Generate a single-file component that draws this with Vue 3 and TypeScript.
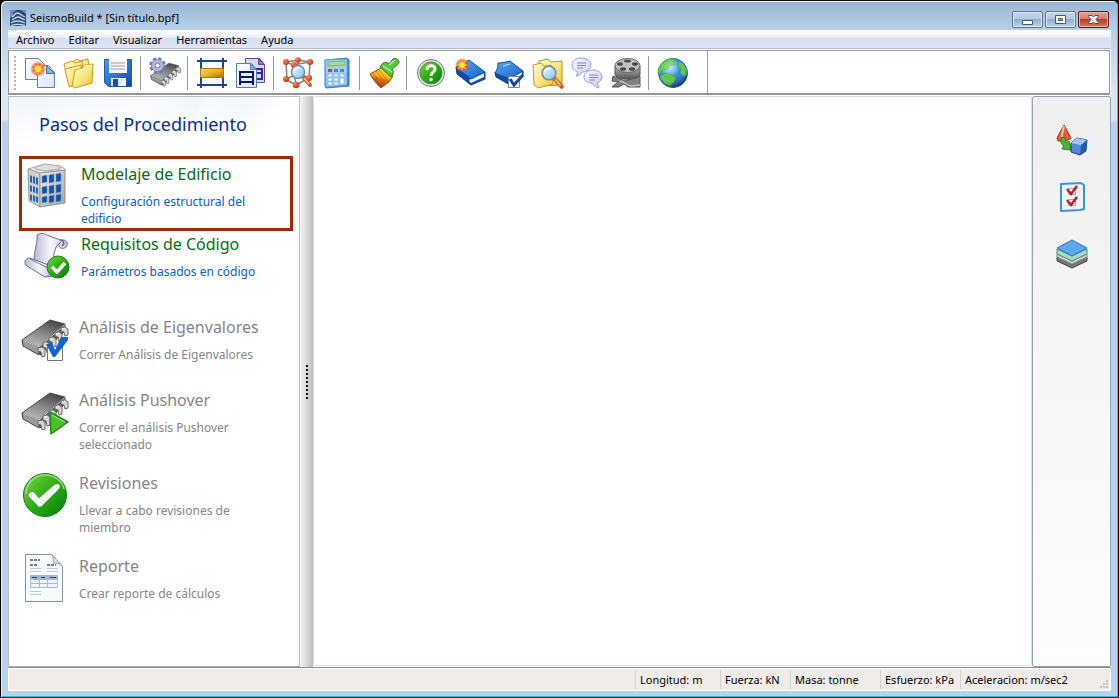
<script setup lang="ts">
interface Step {
  id: string
  title: string
  text: string
  enabled: boolean
  selected?: boolean
}

const menus: string[] = ['Archivo', 'Editar', 'Visualizar', 'Herramientas', 'Ayuda']

const toolGroups: { id: string; label: string }[][] = [
  [
    { id: 'new', label: 'Nuevo' },
    { id: 'open', label: 'Abrir' },
    { id: 'save', label: 'Guardar' },
  ],
  [{ id: 'settings', label: 'Configuración' }],
  [
    { id: 'section', label: 'Secciones' },
    { id: 'copy', label: 'Copiar planta' },
  ],
  [
    { id: 'model', label: 'Ver modelo' },
    { id: 'calculator', label: 'Calculadora' },
  ],
  [{ id: 'brush', label: 'Apariencia' }],
  [
    { id: 'help', label: 'Ayuda' },
    { id: 'booknew', label: 'Manual' },
    { id: 'bookcheck', label: 'Verificación' },
    { id: 'search', label: 'Ejemplos' },
    { id: 'chat', label: 'Foro' },
    { id: 'video', label: 'Videos' },
  ],
  [{ id: 'web', label: 'Sitio web' }],
]

const steps: Step[] = [
  { id: 'building', title: 'Modelaje de Edificio', text: 'Configuración estructural del edificio', enabled: true, selected: true },
  { id: 'code', title: 'Requisitos de Código', text: 'Parámetros basados en código', enabled: true },
  { id: 'eigen', title: 'Análisis de Eigenvalores', text: 'Correr Análisis de Eigenvalores', enabled: false },
  { id: 'pushover', title: 'Análisis Pushover', text: 'Correr el análisis Pushover seleccionado', enabled: false },
  { id: 'checks', title: 'Revisiones', text: 'Llevar a cabo revisiones de miembro', enabled: false },
  { id: 'report', title: 'Reporte', text: 'Crear reporte de cálculos', enabled: false },
]

const units: { text: string; size: string }[] = [
  { text: 'Longitud: m', size: 'w85' },
  { text: 'Fuerza: kN', size: 'w70' },
  { text: 'Masa: tonne', size: 'w90' },
  { text: 'Esfuerzo: kPa', size: 'w80' },
  { text: 'Aceleracion: m/sec2', size: 'w150' },
]
</script>

<template>
  <div class="window">
    <svg class="defs" width="0" height="0" aria-hidden="true">
      <defs>
        <linearGradient id="page" x1="0" y1="0" x2="1" y2="1"><stop offset="0" stop-color="#fff" /><stop offset="1" stop-color="#d3e5f8" /></linearGradient>
        <linearGradient id="folder" x1="0" y1="0" x2="1" y2="1"><stop offset="0" stop-color="#fffbd0" /><stop offset=".5" stop-color="#fbe88a" /><stop offset="1" stop-color="#f0c430" /></linearGradient>
        <linearGradient id="blue" x1="0" y1="0" x2="1" y2="1"><stop offset="0" stop-color="#4a9ef0" /><stop offset="1" stop-color="#0a48a8" /></linearGradient>
        <linearGradient id="cover" x1="0" y1="0" x2="1" y2="1"><stop offset="0" stop-color="#5aaaf4" /><stop offset="1" stop-color="#1560c4" /></linearGradient>
        <linearGradient id="chip" x1=".25" y1=".9" x2=".7" y2=".05"><stop offset="0" stop-color="#b4b4b4" /><stop offset=".5" stop-color="#868686" /><stop offset="1" stop-color="#4c4c4c" /></linearGradient>
        <linearGradient id="gold" x1="0" y1="0" x2="1" y2="1"><stop offset="0" stop-color="#f6dc50" /><stop offset=".5" stop-color="#e2b41c" /><stop offset="1" stop-color="#a07400" /></linearGradient>
        <linearGradient id="lens" x1="0" y1="0" x2="1" y2="1"><stop offset="0" stop-color="#effaff" /><stop offset="1" stop-color="#7fc2ee" /></linearGradient>
        <linearGradient id="lilac" x1="0" y1="0" x2="1" y2="1"><stop offset="0" stop-color="#fbfbff" /><stop offset="1" stop-color="#c8caec" /></linearGradient>
        <linearGradient id="greenball" x1="0" y1="0" x2="1" y2="1"><stop offset="0" stop-color="#7fd644" /><stop offset=".5" stop-color="#2cac14" /><stop offset="1" stop-color="#087a10" /></linearGradient>
        <linearGradient id="paint" x1=".7" y1="0" x2=".4" y2="1"><stop offset="0" stop-color="#ffe64a" /><stop offset=".45" stop-color="#f5b41c" /><stop offset=".6" stop-color="#d8640c" /><stop offset="1" stop-color="#a03c08" /></linearGradient>
        <linearGradient id="scroll" x1="0" y1="0" x2="1" y2="0"><stop offset="0" stop-color="#b9bad2" /><stop offset=".5" stop-color="#f6f6fd" /><stop offset="1" stop-color="#c3c4dc" /></linearGradient>
        <linearGradient id="wall" x1="0" y1="0" x2="1" y2="1"><stop offset="0" stop-color="#efefed" /><stop offset="1" stop-color="#a3a3a0" /></linearGradient>
        <linearGradient id="metal" x1="0" y1="0" x2="0" y2="1"><stop offset="0" stop-color="#b5b5b5" /><stop offset="1" stop-color="#555" /></linearGradient>
        <radialGradient id="globe" cx=".38" cy=".3" r=".75"><stop offset="0" stop-color="#a4dcff" /><stop offset=".5" stop-color="#2c87dc" /><stop offset="1" stop-color="#053c88" /></radialGradient>
        <radialGradient id="shade" cx=".4" cy=".3" r=".7"><stop offset="0" stop-color="#fff" stop-opacity=".45" /><stop offset=".5" stop-color="#fff" stop-opacity="0" /><stop offset="1" stop-color="#013068" stop-opacity=".45" /></radialGradient>
        <radialGradient id="star"><stop offset="0" stop-color="#ff8030" /><stop offset=".6" stop-color="#f5442c" stop-opacity=".9" /><stop offset="1" stop-color="#ff6040" stop-opacity="0" /></radialGradient>
        <radialGradient id="node" cx=".35" cy=".3" r=".7"><stop offset="0" stop-color="#ff8a5c" /><stop offset="1" stop-color="#d42c08" /></radialGradient>
        <g id="flare">
          <circle r="8" fill="url(#star)" />
          <path d="M0-6.500 1.300-3.200 4.600-4.600 3.200-1.300 6.500 0 3.200 1.300 4.600 4.600 1.300 3.200 0 6.500-1.300 3.200-4.600 4.600-3.200 1.300-6.500 0-3.200-1.300-4.600-4.600-1.300-3.200Z" fill="#ffb428" />
          <circle r="3" fill="#ffea3c" />
        </g>
        <g id="microchip">
          <path d="m1 25 17 7v8L2 31Z" fill="#9a9a9a" stroke="#444" />
          <path d="m18 32 26-23v7L19 40Z" fill="#5d5d5d" stroke="#444" />
          <path d="m1 25 28-20 15 4-26 23Z" fill="url(#chip)" stroke="#4a4a4a" />
          <path d="m2 25.500 16 6.500L44 9.500" fill="none" stroke="#c9c9c9" />
          <g fill="#d6d6d6" stroke="#6b6b6b" stroke-linejoin="round">
            <path d="m40 13 4-1 3 2v6l-3 1-1-4-3-1Z" />
            <path d="m34 18 4-1 3 2v7l-3 1-1-5-3-1Z" />
            <path d="m28 23 4-1 3 2v7l-3 1-1-5-3-1Z" />
            <path d="m22 28 4-1 3 2v8l-3 1-1-5-3-1Z" />
            <path d="m17 33 4-1 3 2v7l-3 1-1-5-3-1Z" />
          </g>
          <path d="m41 14 3-1M35 19l3-1M29 24l3-1M23 29l3-1" stroke="#fff" />
        </g>
        <g id="glass">
          <path d="m5 5 7 8" stroke="#d55e20" stroke-width="4" stroke-linecap="round" />
          <path d="m6 6 5 6" stroke="#ffc98a" stroke-width="1.500" />
          <circle r="6.500" fill="url(#lens)" stroke="#6c8fae" stroke-width="1.500" />
          <path d="M-4-1c1-3 4-4 6-3" fill="none" stroke="#fff" stroke-width="1.500" />
        </g>
      </defs>
    </svg>

    <header class="titlebar">
      <svg class="logo" viewBox="0 0 16 16" aria-hidden="true">
        <path d="M0 0h16v16H0Z" fill="#2a4a72" />
        <path d="M0 0h6L3 3v3L0 8ZM11 0h5v4Z" fill="#6f93b8" />
        <path d="M2 7c2-1 3-4 5-4 3 0 5 3 8 4M2 10c2-1 4-3 6-3s4 2 7 3M1 13c3-2 5-2 7-2s4 1 7 2M1 15.500c3-1 6-1.500 9-1l5 1" fill="none" stroke="#c3d9ec" stroke-width="1.300" />
      </svg>
      <span class="caption">SeismoBuild * [Sin título.bpf]</span>
      <div class="controls">
        <button type="button" class="ctl" aria-label="Minimizar">
          <svg viewBox="0 0 29 15"><path d="M9.500 8.500h10v4h-10Z" fill="#fff" stroke="#4b566b" /></svg>
        </button>
        <button type="button" class="ctl" aria-label="Maximizar">
          <svg viewBox="0 0 29 15"><path d="M9.500 3.500h10v8h-10Z" fill="#fff" stroke="#4b566b" /><path d="M12.500 6.500h4v2h-4Z" fill="#9cb8d5" stroke="#4b566b" /></svg>
        </button>
        <button type="button" class="ctl close" aria-label="Cerrar">
          <svg viewBox="0 0 29 15"><path d="M9.500 3.500h3.500l1.500 1.500L16 3.500h3.500v1L17 7.500l2.500 3v1H16L14.500 10 13 11.500H9.500v-1l2.500-3-2.500-3Z" fill="#fff" stroke="#684149" /></svg>
        </button>
      </div>
    </header>

    <div class="client">
      <nav class="menubar">
        <button v-for="m in menus" :key="m" type="button">{{ m }}</button>
      </nav>

      <div class="toolbar">
        <div class="tools">
          <span class="grip"></span>
          <div v-for="(group, i) in toolGroups" :key="i" class="group">
            <button v-for="tool in group" :key="tool.id" type="button" class="tool" :aria-label="tool.label">
              <svg viewBox="0 0 32 32" aria-hidden="true">
                <g v-if="tool.id === 'new'">
                  <path d="M1.500 1.500h13l7 7v14h-20Z" fill="url(#page)" stroke="#5f7fae" />
                  <path d="M13.500 8.500h11l6 7v15h-17Z" fill="url(#page)" stroke="#5f7fae" />
                  <path d="m22.500 8.500 8 8h-8Z" fill="#84b4e6" stroke="#476fa5" />
                  <use href="#flare" x="14" y="12" />
                </g>
                <g v-else-if="tool.id === 'open'" stroke="#c79a1c" stroke-linejoin="round">
                  <path d="m7 6 8-4 2 2 8-2 2 18-17 6Z" fill="url(#folder)" />
                  <path d="m1 7 8-3 3 2 7-2 2 19-15 5Z" fill="url(#folder)" />
                  <path d="m2 12 16-4 2 18-14 4Z" fill="url(#folder)" />
                  <path d="m12 13 8-2 2-3 8-1-1 19-17 5-3-2Z" fill="url(#folder)" />
                  <path d="m13 14 7-2 2-3 6-1" fill="none" stroke="#fffbd8" />
                </g>
                <g v-else-if="tool.id === 'save'">
                  <path d="M2.500 2.500h27v27h-23l-4-4Z" fill="url(#blue)" stroke="#1a5cb4" />
                  <path d="M7 2h18v14H7Z" fill="#f4f6f8" />
                  <path d="M9 6h14M9 9h14M9 12h14" stroke="#b9bdc4" stroke-width="1.500" />
                  <path d="M9 21h15v8H9Z" fill="#dce8f4" /><path d="M11 22h5v7h-5Z" fill="#1c4f91" /><path d="m18 29 4-8h2v8Z" fill="#fff" />
                </g>
                <g v-else-if="tool.id === 'settings'">
                  <use href="#microchip" transform="translate(1 3) scale(.65 .63)" />
                  <circle cx="8.500" cy="8.500" r="6.500" fill="none" stroke="#6f78b8" stroke-width="3.500" stroke-dasharray="3 2.100" />
                  <circle cx="8.500" cy="8.500" r="6" fill="#b4bae6" stroke="#7a82bf" />
                  <circle cx="8.500" cy="8.500" r="2.500" fill="#f2f3ff" stroke="#6c74ae" />
                </g>
                <g v-else-if="tool.id === 'section'">
                  <path d="M5 1v30M27 1v30M1 4h30M1 28h30" stroke="#1a489c" stroke-width="2" />
                  <path d="M4.500 11.500h23v9h-23Z" fill="url(#gold)" stroke="#a9770c" />
                </g>
                <g v-else-if="tool.id === 'copy'">
                  <path d="M10.500 1.500h14l5 6v18h-19Z" fill="#d9d5ef" stroke="#5c4a95" />
                  <path d="m23.500 1.500 6 6h-6Z" fill="#8673bd" stroke="#5c4a95" />
                  <path d="M21 12h6v10h-6M21 16h6" fill="none" stroke="#38209a" stroke-width="2" />
                  <path d="M1.500 6.500h15l5 6v18h-20Z" fill="url(#page)" stroke="#527fae" />
                  <path d="m15.500 6.500 6 6h-6Z" fill="#75aedf" stroke="#527fae" />
                  <path d="M5 28V15h13v13M5 20h13M5 25h13" fill="none" stroke="#0a1480" stroke-width="2" />
                </g>
                <g v-else-if="tool.id === 'model'">
                  <path d="m4 5 7 3 17-3-12-2ZM4 5l1 18 9 5 13-7 1-16M11 8l3 20M16 2v15M5 22l11-6 11 5" fill="none" stroke="#858585" stroke-width="1.600" />
                  <g fill="url(#node)"><circle cx="4" cy="5" r="3" /><circle cx="16" cy="3" r="2.800" /><circle cx="28" cy="5" r="3" /><circle cx="12" cy="8" r="3" /><circle cx="4" cy="22" r="3" /><circle cx="14" cy="28" r="3.200" /><circle cx="27" cy="21" r="3" /></g>
                  <use href="#glass" x="16" y="15" />
                </g>
                <g v-else-if="tool.id === 'calculator'">
                  <path d="m4 3 22-2 2 2v26l-23 2-1-2Z" fill="#3386d0" stroke="#347dc2" />
                  <path d="m4 3 22-1v26L5 30Z" fill="#9bcff5" stroke="#5ba7df" />
                  <path d="m7 5 17-1v4L7 9Z" fill="#a9df80" stroke="#65a050" stroke-width=".6" />
                  <path d="M7 12h4v3H7z" fill="#cf3f32" /><path d="M13 12h4v3h-4zM19 12h4v3h-4z" fill="#6e7f94" />
                  <path d="M7 17h4v3H7zM13 17h4v3h-4zM19 17h4v3h-4zM7 21h4v3H7zM13 21h4v3h-4zM7 25h4v3H7zM13 25h4v3h-4zM19 21h4v6h-4z" fill="#f5faff" stroke="#639bd0" stroke-width=".5" />
                </g>
                <g v-else-if="tool.id === 'brush'">
                  <path d="m2 17 11-6 12 8-4 6-8 6c-4-4-8-8-11-14Z" fill="url(#paint)" stroke="#9a5a14" stroke-linejoin="round" />
                  <path d="m5 16 10 13M8 14l10 12M11 13l9 11" stroke="#b8741a" stroke-width=".8" />
                  <path d="m12 10 3-4c2-1 4-1 6 1l4-5c1-1 3-1 5 1s1 4-1 5l-5 4c1 2 2 3 1 5l-2 3Z" fill="#58c440" stroke="#268521" />
                  <path d="m15 9 9 6M21 8l6-5" fill="none" stroke="#b5eb9c" stroke-width="1.500" />
                </g>
                <g v-else-if="tool.id === 'help'">
                  <circle cx="16" cy="16" r="13.500" fill="#e6e6e6" stroke="#777" /><circle cx="16" cy="16" r="11" fill="url(#greenball)" stroke="#3c963a" />
                  <path d="M12 13c0-5 8-6 8-1 0 3-4 3-4 7" fill="none" stroke="#fff" stroke-width="3" /><circle cx="16" cy="22.500" r="1.800" fill="#fff" />
                </g>
                <g v-else-if="tool.id === 'booknew'">
                  <path d="m2 10 1 7 14 11 14-6v-7l-14 6Z" fill="#0f4da8" stroke="#0a3c88" stroke-linejoin="round" />
                  <path d="m16 22 14-6v4l-13 6c-2-1-2-3-1-4Z" fill="#e8eef6" />
                  <path d="m2 10 13-7 16 12-14 7Z" fill="url(#cover)" stroke="#0f52b0" stroke-linejoin="round" />
                  <use href="#flare" transform="translate(8 8) scale(.9)" />
                </g>
                <g v-else-if="tool.id === 'bookcheck'">
                  <path d="m2 15 1 5 14 8 13-9v-5l-14 7Z" fill="#0f4da8" stroke="#0a3c88" stroke-linejoin="round" />
                  <path d="m16 22 13-7v4l-12 7c-2-1-2-3-1-4Z" fill="#e8eef6" />
                  <path d="M5 6c4 0 8-1 12-2l13 10c-4 2-9 4-13 8L2 16c2-3 3-6 3-10Z" fill="url(#cover)" stroke="#0f52b0" stroke-linejoin="round" /><path d="m10 9 7-2" stroke="#c8e4ff" />
                  <path d="M15.500 19.500h11v11h-11Z" fill="#fff" stroke="#868686" /><path d="m17 22 4 6 9-10" fill="none" stroke="#104b9d" stroke-width="3" />
                </g>
                <g v-else-if="tool.id === 'search'">
                  <path d="m7 4 9-2 3 3 11-1v24l-22 1Z" fill="url(#folder)" stroke="#bf921a" />
                  <path d="m1 8 8-2 3 3 7-1 2 19-15 4-4-3Z" fill="url(#folder)" stroke="#c79a1c" />
                  <use href="#glass" transform="translate(17 16) scale(1.050)" />
                </g>
                <g v-else-if="tool.id === 'chat'" fill="url(#lilac)" stroke="#9c9ed0">
                  <path d="M10 1c6 0 10 3 10 7s-4 7-9 7c-1 2-3 4-6 4l2-4c-4-1-6-4-6-7 0-4 4-7 9-7Z" />
                  <path d="M22 13c5 0 9 3 9 7 0 3-2 5-5 6l2 5c-4-1-6-3-7-5-5 0-8-3-8-6 0-4 4-7 9-7Z" />
                  <path d="M6 6h9M6 8.500h9M6 11h6M18 18h9M18 20.500h9M18 23h6" fill="none" stroke="#8486bf" />
                </g>
                <g v-else-if="tool.id === 'video'">
                  <path d="m3 19 12 5 15-5v11H18l-4-3-5 3H2l6-5-6-1Z" fill="#828282" stroke="#555" /><path d="M10 24c5 0 6 5 11 5l9-1" fill="none" stroke="#c4c4c4" stroke-width="1.500" />
                  <path d="M5 9v8c0 7 25 7 25 0V9Z" fill="url(#metal)" stroke="#555" />
                  <ellipse cx="17.500" cy="8.500" rx="12.500" ry="7" fill="#c2c2c2" stroke="#666" />
                  <g fill="#4a4a4a"><ellipse cx="17.500" cy="4" rx="3.500" ry="1.600" /><ellipse cx="10" cy="7" rx="3" ry="1.800" /><ellipse cx="25" cy="7" rx="3" ry="1.800" /><ellipse cx="13" cy="12" rx="3.200" ry="1.800" /><ellipse cx="22" cy="12" rx="3.200" ry="1.800" /></g>
                </g>
                <g v-else>
                  <circle cx="16" cy="16" r="14.500" fill="url(#globe)" stroke="#1d66ad" />
                  <path d="M5 6c4-4 9-5 14-4l-3 2 2 3-5 2-2 3-5 1-4 4-1-3c0-3 2-6 4-8ZM22 4c4 2 7 5 8 9v4l-3 3-4-4 1-4-3-3ZM3 19l6-3 6 2 4 2-2 5-4 4c-5-1-9-5-10-10Z" fill="#55c83c" stroke="#2f9a3c" stroke-width=".6" />
                  <circle cx="16" cy="16" r="14.500" fill="url(#shade)" />
                </g>
              </svg>
            </button>
          </div>
        </div>
      </div>

      <div class="workspace">
        <aside class="steps">
          <h1>Pasos del Procedimiento</h1>
          <div class="list">
            <button
              v-for="step in steps"
              :key="step.id"
              type="button"
              class="step"
              :class="{ enabled: step.enabled, selected: step.selected }"
            >
              <svg viewBox="0 0 48 48" aria-hidden="true">
                <g v-if="step.id === 'building'">
                  <path d="m5 7 14-4 20 2 4 3-27 4Z" fill="#e9e9e9" stroke="#aaa" /><path d="m12 5 10-3 15 2v3l-15 2-10-2Z" fill="#ddd" stroke="#aaa" />
                  <path d="m5 7 12 4v34L6 39Z" fill="#d0d0ce" stroke="#999" /><path d="m17 11 25-3v33l-25 4Z" fill="url(#wall)" stroke="#929292" />
                  <path d="m7 13 2 1v7l-2-1zM10 14l2 1v7l-2-1zM13 15l2 1v7l-2-1zM7 23l2 1v6l-2-1zM10 24l2 1v6l-2-1zM13 25l2 1v6l-2-1zM7 32l2 1v6l-2-1zM10 33l2 1v6l-2-1zM13 34l2 1v6l-2-1z" fill="#2165b6" />
                  <path d="m19 14 5-1v7l-5 1zM26 13l5-1v8l-5 1zM33 12l5-1v8l-5 1zM19 25l5-1v7l-5 1zM26 24l5-1v8l-5 1zM33 23l5-1v8l-5 1zM19 35l5-1v6l-5 1zM26 34l5-1v7l-5 1zM33 33l5-1v7l-5 1z" fill="#1451a8" stroke="#7898bd" stroke-width=".5" />
                </g>
                <g v-else-if="step.id === 'code'">
                  <path d="M14 3c3-2 7-2 10 0l13 5c7-1 9 3 6 7-3 3-8 1-7-3l2-2c-4 2-9 9-7 25l-20-6C11 18 15 10 14 3Z" fill="url(#scroll)" stroke="#71718d" />
                  <path d="M37 8c4 0 5 4 2 6" fill="none" stroke="#666789" stroke-width="1.500" />
                  <path d="m7 26 24 9v9l-9 1L4 34c-4-3-2-8 3-8Z" fill="url(#scroll)" stroke="#71718d" /><path d="m7 27 18 9c4 3 2 8-3 9" fill="none" stroke="#777995" />
                  <circle cx="35" cy="35" r="11" fill="url(#greenball)" stroke="#178723" /><path d="m29 35 5 5 8-9" fill="none" stroke="#fff" stroke-width="3.500" />
                </g>
                <g v-else-if="step.id === 'eigen'">
                  <use href="#microchip" /><path d="M26.500 31.500h15v14h-15Z" fill="#f8f8f8" stroke="#777" /><path d="m25 29 6-1 3 7 6-13h7v3L34 42h-2Z" fill="#1263d2" />
                </g>
                <g v-else-if="step.id === 'pushover'">
                  <use href="#microchip" /><path d="m29 24 18 10-17 12Z" fill="#51bd25" stroke="#218817" stroke-width="1.500" stroke-linejoin="round" /><path d="m31 27 13 7" stroke="#a3ec6e" />
                </g>
                <g v-else-if="step.id === 'checks'">
                  <circle cx="24" cy="24" r="21.500" fill="url(#greenball)" stroke="#128120" /><path d="M5 23C5 12 14 4 24 4s18 7 19 14" fill="none" stroke="#9fdb7c" stroke-width="1.500" />
                  <path d="M7 25c0-3 3-5 6-4l5 6 15-13c4-3 8 0 5 4L21 35c-2 2-4 1-5-1Z" fill="#f4f6f3" stroke="#54a943" stroke-width=".7" />
                </g>
                <g v-else>
                  <path d="M4.500.5h26l11 12v35h-37Z" fill="#f8fbfd" stroke="#8092aa" /><path d="m30.500.5 11 12c-3-3-6-4-9-3 0-3 0-6-2-9Z" fill="#d7e4f1" stroke="#8da9c8" />
                  <path d="M9 6h10M9 11h8M26 11h9" stroke="#4d5562" stroke-width="1.500" stroke-dasharray="3 1" /><path d="M9 14.500h11M9 17.500h11M26 14.500h11M26 17.500h11M9 37.500h11M9 40.500h11" stroke="#b7ccdf" />
                  <path d="M9.500 21.500h27v12h-27ZM18.500 21v12M26.500 21v12M9 25.500h27M9 29.500h27" fill="#eef4f9" stroke="#a4bdd6" /><path d="M9 21h28v4H9Z" fill="#9db9d3" /><path d="M11 23.500h5M20 23.500h4M29 23.500h6" stroke="#444" />
                </g>
              </svg>
              <span class="copy">
                <span class="name">{{ step.title }}</span>
                <span class="text">{{ step.text }}</span>
              </span>
            </button>
          </div>
        </aside>
        <div class="splitter" role="separator"><span class="handle"></span></div>
        <main class="canvas"></main>
        <aside class="side">
          <button type="button" aria-label="Vista 3D">
            <svg viewBox="0 0 32 32">
              <path d="m8 1 7 13-5 3H2L1 14Z" fill="#ef5a32" stroke="#a82c16" /><path d="m8 2-3 13" stroke="#ffc3a0" stroke-width="2" />
              <path d="m4 14 5-1 1 6 3-2 2 9-9-1 2-3c-3-2-4-4-2-8Z" fill="#43bd2d" stroke="#218819" />
              <path d="m15 19 6-5 10 2-1 11-6 4-9-3Z" fill="#5288dc" stroke="#193e83" /><path d="m15 19 6-5 10 2-6 5Z" fill="#a3c6f4" /><path d="m25 21 6-5-1 11-6 4Z" fill="#2a58a8" />
            </svg>
          </button>
          <button type="button" aria-label="Revisiones">
            <svg viewBox="0 0 32 32">
              <path d="m5 3 20-1 3 2v24l-4 1-19 1Z" fill="#edf3f8" stroke="#3598dd" stroke-width="2" stroke-linejoin="round" />
              <path d="M12.500 7.500h7v6h-7ZM12.500 18.500h7v6h-7Z" fill="#fff" stroke="#aaa" /><path d="m11 8 4 5 6-8M11 19l4 5 6-8" fill="none" stroke="#c91922" stroke-width="2.500" />
            </svg>
          </button>
          <button type="button" aria-label="Capas">
            <svg viewBox="0 0 32 32">
              <path d="m1 19 15 7 15-7v4l-15 7-15-7Z" fill="#777" stroke="#444" /><path d="m1 16 15 7 15-7v3l-15 7-15-7Z" fill="#d4d4d4" stroke="#888" />
              <path d="m1 11 15 7 15-7v5l-15 7-15-7Z" fill="#a8dcc0" stroke="#568b70" /><path d="m16 2 15 8-15 8-15-8Z" fill="#5aa9f1" stroke="#2c74c1" />
            </svg>
          </button>
        </aside>
      </div>

      <footer class="status">
        <span v-for="u in units" :key="u.text" :class="u.size">{{ u.text }}</span>
        <svg class="resize" viewBox="0 0 10 10" aria-hidden="true"><path d="M7 1h2v2H7zM4 4h2v2H4zM7 4h2v2H7zM1 7h2v2H1zM4 7h2v2H4zM7 7h2v2H7z" fill="#c5c1c1" /></svg>
      </footer>
    </div>
  </div>
</template>

<style>
html, body { height: 100%; margin: 0; background: #000; }
#app { height: 100%; }
</style>

<style scoped>
.window {
  box-sizing: border-box;
  display: flex;
  flex-direction: column;
  height: 100%;
  min-height: 640px;
  padding: 0 7px 6px 6px;
  border: 1px solid #111;
  border-left-color: #000;
  border-radius: 6px 6px 0 0;
  background: linear-gradient(#9ab5d3, #bad0e9 30px, #dbe6f4 90px, #dbe6f4 118px, #b9d1ea 122px, #b9d1ea);
  box-shadow: inset 1px 1px #e8f1fa, inset -1px -1px #25c5dc;
  font: 11px/16px "Noto Sans", "Open Sans", sans-serif;
  color: #000;
}
.defs { position: absolute; }
button { margin: 0; padding: 0; border: 0; background: none; font: inherit; color: inherit; text-align: left; }
svg { display: block; }

.titlebar { display: flex; align-items: center; height: 29px; padding: 0 2px 0 3px; flex: none; }
.logo { width: 16px; height: 16px; margin-top: 5px; }
.caption { margin: 5px 0 0 4px; flex: 1; }
.controls { display: flex; gap: 2px; padding-top: 7px; }
.ctl {
  box-sizing: border-box;
  width: 31px;
  height: 17px;
  border: 1px solid #5d7390;
  border-radius: 2px;
  background: linear-gradient(#c4d6e9, #b2c9e1 48%, #92afcf 50%, #b9d2ea);
  box-shadow: inset 0 0 0 1px #dbe8f5;
}
.ctl svg { width: 29px; height: 15px; }
.ctl.close { border-color: #571c20; background: linear-gradient(#e2a295, #d27d6b 48%, #b93c25 50%, #d37860); box-shadow: inset 0 0 0 1px #eab4aa; }

.client { flex: 1; min-height: 0; display: flex; flex-direction: column; background: #fff; margin-left: 1px; }
.menubar { display: flex; flex: none; height: 18px; padding-left: 1px; background: linear-gradient(#fff, #eef1f8 7px, #d8deef 8px, #e0e5f4); border-bottom: 1px solid #b4bad1; }
.menubar button { padding: 1px 7px; line-height: 18px; }

.toolbar { flex: none; display: flex; margin: 1px 1px 0 0; border: 1px solid #969696; border-bottom-width: 2px; background: #fff; height: 42px; }
.tools { display: flex; align-items: center; padding: 1px 15px 0 5px; border-right: 1px solid #a0a0a0; }
.grip { width: 2px; height: 34px; margin-right: 4px; background: repeating-linear-gradient(#b5b5b5 0 2px, #fff 2px 4px); }
.group { display: flex; }
.group + .group { margin-left: 3px; padding-left: 4px; border-left: 1px solid #969696; }
.tool { display: grid; place-items: center; width: 39px; height: 34px; }
.tool svg { width: 32px; height: 32px; }

.workspace { flex: 1; min-height: 0; display: flex; margin-top: 1px; }
.steps {
  box-sizing: border-box;
  flex: none;
  width: 292px;
  border: 1px solid #bebebe;
  border-bottom-color: #aaa;
  background:
    linear-gradient(rgba(255, 255, 255, 0), #fff) top / 100% 46px no-repeat,
    linear-gradient(115deg, #eef4fb, #f9fbfe 45%, #eef4fb 62%, #f5f9fd 64%, #f1f6fc 78%, #fff 90%) top / 100% 46px no-repeat,
    #fff;
}
.steps h1 { margin: 0; padding: 13px 0 1px 30px; font-size: 18px; line-height: 28px; font-weight: 400; color: #0a319a; }
.list { display: flex; flex-direction: column; padding: 17px 6px 0 12px; }
.step { display: flex; align-items: flex-start; gap: 10px; min-height: 55px; margin-bottom: 18px; color: #868686; }
.step svg { flex: none; width: 48px; height: 48px; }
.step.enabled { padding-left: 2px; margin-bottom: 28px; }
.step.selected { margin: 0 0 1px -2px; padding: 3px 30px 1px 1px; border: 3px solid #a32a00; }
.copy { display: flex; flex-direction: column; max-width: 190px; }
.name { font-size: 16px; line-height: 24px; margin-bottom: 7px; white-space: nowrap; }
.text { font-size: 12px; line-height: 17px; }
.enabled .name { color: #0a6e14; }
.enabled .text { color: #0a62c4; }

.splitter { flex: none; width: 13px; display: flex; align-items: center; justify-content: center; background: linear-gradient(90deg, #f6f6f6, #bdbdbd); }
.handle { width: 2px; height: 34px; background: repeating-linear-gradient(#111 0 2px, transparent 2px 4px); }
.canvas { flex: 1; min-width: 0; margin-bottom: 1px; border: 1px solid #d5dfea; border-radius: 2px; background: #fff; }
.side { box-sizing: border-box; flex: none; width: 79px; display: flex; flex-direction: column; align-items: center; gap: 25px; padding-top: 27px; border: 1px solid #93a0b6; border-radius: 2px; background: linear-gradient(#efefef, #fdfdfd); }
.side svg { width: 32px; height: 32px; }

.status { box-sizing: border-box; position: relative; flex: none; display: flex; justify-content: flex-end; height: 24px; border: 1px solid #fff; border-top: 1px solid #8d8d8d; background: #f0ecea; box-shadow: inset 0 1px #fff; }
.status span { box-sizing: border-box; padding-left: 4px; margin: 2px 0 1px; border-left: 1px solid #d5d1cf; line-height: 19px; white-space: nowrap; }
.w85 { width: 85px; }
.w70 { width: 70px; }
.w90 { width: 90px; }
.w80 { width: 80px; }
.w150 { width: 150px; }
.resize { position: absolute; right: 1px; bottom: 1px; width: 10px; height: 10px; }
</style>
